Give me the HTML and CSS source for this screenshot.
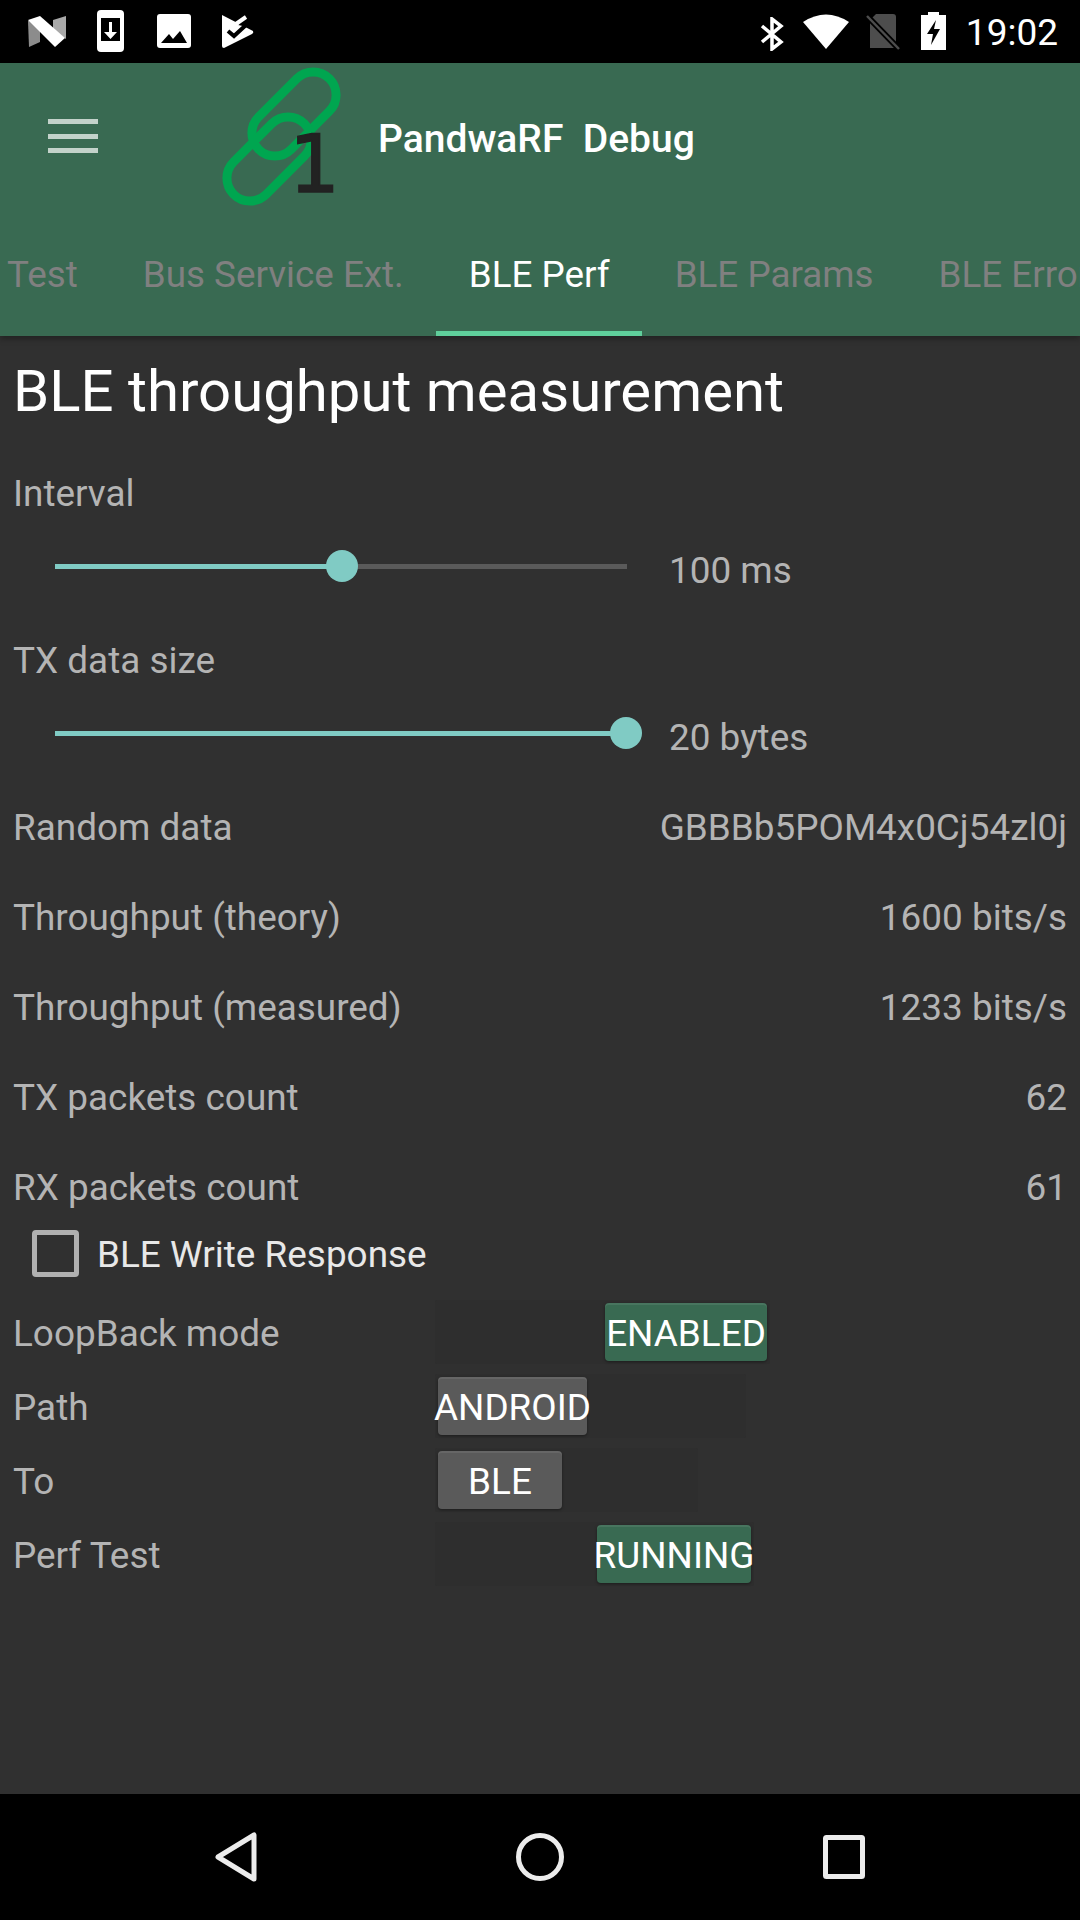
FILE: index.html
```html
<!DOCTYPE html>
<html lang="en">
<head>
    <meta charset="UTF-8">
    <title>PandwaRF Debug</title>
    <link rel="stylesheet" href="styles.css">
</head>
<body>
<div class="phone">

    <div class="statusbar">
        <div class="status-left">
            <svg class="ic-n" width="38" height="32" viewBox="0 0 38 32">
                <path d="M0 5 L12 2 L12 26 L1 31 Z" fill="#8c8c8c"/>
                <path d="M25 4 L38 0 L38 23 L25 14 Z" fill="#a8a8a8"/>
                <path d="M0 4 L12 0 L37 22 L27 31 Z" fill="#fff"/>
            </svg>
            <svg class="ic-dl" width="27" height="42" viewBox="0 0 27 42">
                <rect width="27" height="42" rx="4" fill="#fff"/>
                <rect x="4" y="8" width="19" height="23" fill="#000"/>
                <path d="M12 12 h3 v10 h5 l-6.500 7 l-6.500 -7 h5 z" fill="#fff"/>
            </svg>
            <svg class="ic-img" width="34" height="34" viewBox="0 0 34 34">
                <rect width="34" height="34" rx="3" fill="#fff"/>
                <path d="M4 29 L12 20 L16 25 L23 17 L30 29 Z" fill="#000"/>
            </svg>
            <svg class="ic-check" width="34" height="36" viewBox="0 0 34 36">
                <path d="M1 1 L32 17 Q33 19 31 20 L3 34 Q1 34 1 32 Z" fill="#fff"/>
                <path d="M17 11 L26 4 L31 9 L27 13 Z" fill="#000"/>
                <path d="M7 17 L13 22 L25 11" fill="none" stroke="#000" stroke-width="4"/>
                <path d="M12 12 L25 3" fill="none" stroke="#fff" stroke-width="4"/>
            </svg>
        </div>
        <div class="status-right">
            <svg class="ic-bt" width="24" height="34" viewBox="0 0 24 34">
                <path d="M2 9 L21 25 L12 32 L12 2 L21 9 L2 25" fill="none" stroke="#fff" stroke-width="3.500"/>
            </svg>
            <svg class="ic-wifi" width="46" height="36" viewBox="0 0 46 36">
                <path d="M23 36 L0 9 Q23 -6 46 9 Z" fill="#fff"/>
            </svg>
            <svg class="ic-sim" width="35" height="36" viewBox="0 0 35 36">
                <path d="M10 0 H27 Q30 0 30 3 V34 H4 V6 Z" fill="#4d4d4d"/>
                <path d="M1 2 L33 35" stroke="#000" stroke-width="6"/>
                <path d="M1 2 L33 35" stroke="#4d4d4d" stroke-width="2.500"/>
            </svg>
            <svg class="ic-batt" width="25" height="38" viewBox="0 0 25 38">
                <path d="M7 0 H18 V3 H25 V38 H0 V3 H7 Z" fill="#fff"/>
                <path d="M15 8 L6 22 H12 L10 33 L19 17 H13 Z" fill="#000"/>
            </svg>
            <span class="clock">19:02</span>
        </div>
    </div>

    <header class="appbar">
        <div class="toolbar">
            <div class="hamburger"><i></i><i></i><i></i></div>
            <svg class="logo" width="120" height="140" viewBox="222 66 120 140">
                <rect x="244" y="91" width="100" height="46" rx="23" transform="rotate(-45 294 114)" fill="none" stroke="#00a650" stroke-width="9"/>
                <rect x="219" y="136" width="100" height="46" rx="23" transform="rotate(-45 269 159)" fill="none" stroke="#00a650" stroke-width="9"/>
                <text x="289" y="192" class="logo-one">1</text>
            </svg>
            <h1 class="app-title">PandwaRF  Debug</h1>
        </div>
        <nav class="tabs">
            <span class="tab">Test</span>
            <span class="tab">Bus Service Ext.</span>
            <span class="tab tab-active">BLE Perf</span>
            <span class="tab">BLE Params</span>
            <span class="tab">BLE Errors</span>
        </nav>
    </header>

    <main class="content">
        <h2 class="heading">BLE throughput measurement</h2>

        <div class="field-label">Interval</div>
        <div class="slider-row">
            <div class="slider">
                <div class="slider-fill" style="width: 287px"></div>
                <div class="slider-thumb" style="left: 287px"></div>
            </div>
            <span class="slider-value">100 ms</span>
        </div>

        <div class="field-label second">TX data size</div>
        <div class="slider-row">
            <div class="slider">
                <div class="slider-fill" style="width: 571px"></div>
                <div class="slider-thumb" style="left: 571px"></div>
            </div>
            <span class="slider-value">20 bytes</span>
        </div>

        <div class="stats">
            <div class="stat"><span>Random data</span><span>GBBBb5POM4x0Cj54zl0j</span></div>
            <div class="stat"><span>Throughput (theory)</span><span>1600 bits/s</span></div>
            <div class="stat"><span>Throughput (measured)</span><span>1233 bits/s</span></div>
            <div class="stat"><span>TX packets count</span><span>62</span></div>
            <div class="stat"><span>RX packets count</span><span>61</span></div>
        </div>

        <div class="check-row">
            <span class="checkbox"></span>
            <span class="check-label">BLE Write Response</span>
        </div>

        <div class="toggles">
            <div class="toggle-row">
                <span class="toggle-label">LoopBack mode</span>
                <div class="track track-on w-enabled"><span class="knob knob-green k-enabled">ENABLED</span></div>
            </div>
            <div class="toggle-row">
                <span class="toggle-label">Path</span>
                <div class="track w-android"><span class="knob k-android">ANDROID</span></div>
            </div>
            <div class="toggle-row">
                <span class="toggle-label">To</span>
                <div class="track w-ble"><span class="knob k-ble">BLE</span></div>
            </div>
            <div class="toggle-row">
                <span class="toggle-label">Perf Test</span>
                <div class="track track-on w-running"><span class="knob knob-green k-running">RUNNING</span></div>
            </div>
        </div>
    </main>

    <footer class="navbar">
        <svg width="42" height="50" viewBox="0 0 42 50">
            <path d="M39 3 V47 L3 25 Z" fill="none" stroke="#ececec" stroke-width="5" stroke-linejoin="round"/>
        </svg>
        <svg width="48" height="48" viewBox="0 0 48 48">
            <circle cx="24" cy="24" r="21.500" fill="none" stroke="#ececec" stroke-width="5"/>
        </svg>
        <svg width="42" height="44" viewBox="0 0 42 44">
            <rect x="2.500" y="2.500" width="37" height="39" rx="1" fill="none" stroke="#ececec" stroke-width="5"/>
        </svg>
    </footer>

</div>
</body>
</html>
```

FILE: styles.css
```css
html, body {
    margin: 0;
    padding: 0;
}

body {
    background: #000;
    font-family: Roboto, sans-serif;
}

.phone {
    width: 1080px;
    height: 1920px;
    display: flex;
    flex-direction: column;
    overflow: hidden;
}

/* status bar */

.statusbar {
    height: 63px;
    background: #000;
    display: flex;
    justify-content: space-between;
    flex-shrink: 0;
}

.status-left {
    display: flex;
    padding-left: 28px;
    align-items: flex-start;
}

.ic-n { margin-top: 16px; }
.ic-dl { margin: 10px 0 0 31px; }
.ic-img { margin: 14px 0 0 33px; }
.ic-check { margin: 14px 0 0 30px; }

.status-right {
    display: flex;
    align-items: flex-start;
    padding-right: 22px;
}

.ic-bt { margin-top: 17px; }
.ic-wifi { margin: 13px 0 0 19px; }
.ic-sim { margin: 14px 0 0 17px; }
.ic-batt { margin: 12px 0 0 20px; }

.clock {
    color: #fff;
    font-size: 37px;
    line-height: 66px;
    margin-left: 20px;
}

/* app bar */

.appbar {
    height: 273px;
    background: #396a52;
    flex-shrink: 0;
    display: flex;
    flex-direction: column;
    box-shadow: 0 3px 6px rgba(0, 0, 0, 0.3);
    position: relative;
}

.toolbar {
    height: 168px;
    display: flex;
    align-items: center;
    padding-left: 48px;
}

.hamburger {
    width: 50px;
    height: 34px;
    margin-top: -22px;
    display: flex;
    flex-direction: column;
    justify-content: space-between;
}

.hamburger i {
    display: block;
    height: 5px;
    background: #c3d2ca;
}

.logo {
    margin: -23px 0 0 124px;
}

.logo-one {
    font-family: "DejaVu Sans", sans-serif;
    font-size: 80px;
    fill: #222;
    stroke: #222;
    stroke-width: 1.500px;
}

.app-title {
    margin: -16px 0 0 36px;
    color: #fff;
    font-size: 39px;
    font-weight: 500;
    white-space: pre;
}

.tabs {
    height: 105px;
    display: flex;
    margin-left: -25.500px;
    white-space: nowrap;
}

.tab {
    padding: 22px 32.500px 0;
    box-sizing: border-box;
    height: 100%;
    line-height: 44px;
    font-size: 36.800px;
    color: #808080;
    flex-shrink: 0;
}

.tab-active {
    color: #fff;
    border-bottom: 5px solid #5fcf9b;
}

/* page content */

.content {
    flex: 1;
    background: #303030;
    padding: 0 13px;
    color: #b4b4b4;
    font-size: 36.900px;
}

.heading {
    margin: 0;
    height: 132px;
    padding-top: 19px;
    box-sizing: border-box;
    line-height: 72px;
    font-size: 58.100px;
    font-weight: 400;
    color: #fff;
}

.field-label {
    height: 48px;
    padding-top: 2px;
    box-sizing: border-box;
    line-height: 48px;
}

.field-label.second {
    margin-top: 39px;
}

.slider-row {
    height: 60px;
    margin-top: 20px;
    padding-left: 42px;
    display: flex;
    align-items: center;
}

.slider {
    width: 572px;
    height: 5px;
    background: #5a5a5a;
    position: relative;
}

.slider-fill {
    height: 100%;
    background: #80cbc4;
}

.slider-thumb {
    position: absolute;
    top: -14px;
    width: 32px;
    height: 32px;
    margin-left: -16px;
    border-radius: 50%;
    background: #80cbc4;
}

.slider-value {
    margin: 8px 0 0 42px;
}

.stats {
    margin-top: 18px;
}

.stat {
    height: 90px;
    padding-top: 2px;
    box-sizing: border-box;
    display: flex;
    justify-content: space-between;
    align-items: center;
}

.check-row {
    height: 44px;
    display: flex;
    align-items: center;
    padding-left: 19px;
    color: #e8e8e8;
}

.checkbox {
    width: 47px;
    height: 47px;
    box-sizing: border-box;
    border: 5px solid #b0b0b0;
    border-radius: 4px;
    flex-shrink: 0;
}

.check-label {
    margin: 2px 0 0 18px;
}

.toggles {
    margin-top: 20px;
}

.toggle-row {
    height: 74px;
    display: flex;
    align-items: center;
}

.toggle-label {
    width: 422px;
    padding-top: 2px;
    flex-shrink: 0;
}

.track {
    height: 64px;
    box-sizing: border-box;
    padding: 3px;
    display: flex;
    background: #2e2e2e;
    border-radius: 2px;
}

.track-on {
    justify-content: flex-end;
}

.w-enabled { width: 335px; }
.w-android { width: 311px; }
.w-ble { width: 263px; }
.w-running { width: 319px; }

.knob {
    height: 100%;
    box-sizing: border-box;
    padding-top: 3px;
    display: flex;
    justify-content: center;
    align-items: center;
    white-space: nowrap;
    color: #fff;
    background: #5a5a5a;
    border-radius: 4px;
    box-shadow: inset 0 2px 0 rgba(255, 255, 255, 0.08), 0 1px 3px rgba(0, 0, 0, 0.4);
}

.knob-green {
    background: #396a52;
}

.k-enabled { width: 162px; }
.k-android { width: 149px; }
.k-ble { width: 124px; }
.k-running { width: 154px; }

/* nav bar */

.navbar {
    height: 126px;
    flex-shrink: 0;
    background: #000;
    display: flex;
    align-items: center;
    padding: 0 215px;
    justify-content: space-between;
}
```
